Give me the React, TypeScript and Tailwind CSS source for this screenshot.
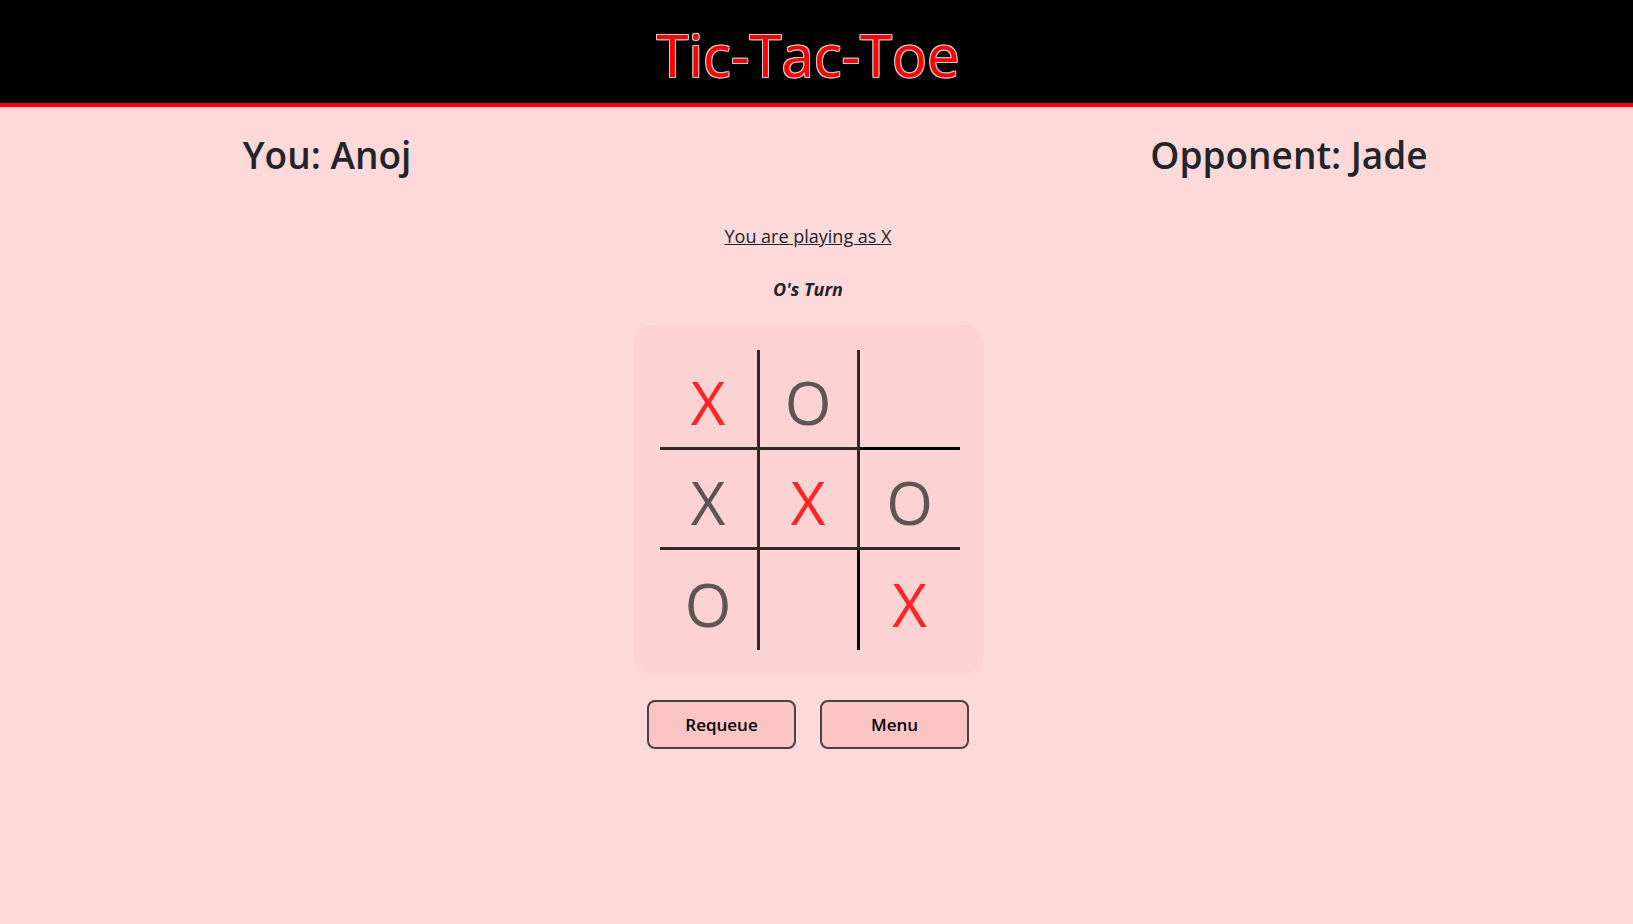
import React from 'react';

type Mark = 'X' | 'O' | '';

const board: { mark: Mark; mine: boolean }[] = [
    { mark: 'X', mine: true }, { mark: 'O', mine: false }, { mark: '', mine: false },
    { mark: 'X', mine: false }, { mark: 'X', mine: true }, { mark: 'O', mine: false },
    { mark: 'O', mine: false }, { mark: '', mine: false }, { mark: 'X', mine: true },
];

function Cell({ index, mark, mine }: { index: number; mark: Mark; mine: boolean }) {
    const col = index % 3;
    const row = Math.floor(index / 3);
    const lineColor = mark === '' ? 'border-black' : 'border-[#302828]';

    return (
        <div
            className={[
                'w-[100px] h-[100px] flex items-center justify-center box-border',
                lineColor,
                col < 2 ? 'border-r-[3px]' : '',
                row < 2 ? 'border-b-[3px]' : '',
            ].join(' ')}
        >
            <span
                className={`text-[60px] leading-none pt-[8px] ${mine ? 'text-[#ff2424]' : 'text-[#5f5555]'}`}
            >
                {mark}
            </span>
        </div>
    );
}

export default function App() {
    return (
        <div className="min-h-[924px] bg-[#fdd9d9] font-['Open_Sans',sans-serif] text-[#212529]">
            <header className="h-[107px] bg-black border-b-4 border-[#ff0000] flex items-center justify-center pr-[17px]">
                <h1 className="text-[58px] text-[#ff0000] leading-none mt-[6px] [text-shadow:1px_1px_0_#cfcfcf,-1px_-1px_0_#cfcfcf,1px_-1px_0_#cfcfcf,-1px_1px_0_#cfcfcf]">
                    Tic-Tac-Toe
                </h1>
            </header>

            <div className="w-[1616px]">
                <div className="flex justify-between pt-[24px]">
                    <h2 className="w-[654px] text-center text-[37px] font-semibold leading-[48px]">You: Anoj</h2>
                    <h2 className="w-[654px] text-center text-[37px] font-semibold leading-[48px]">Opponent: Jade</h2>
                </div>

                <div className="flex flex-col items-center">
                    <p className="mt-[43px] text-[18px] underline leading-[28px]">You are playing as X</p>
                    <p className="mt-[25px] text-[18px] font-bold italic leading-[28px]">O's Turn</p>

                    <div className="mt-[22px] w-[351px] h-[349px] rounded-[20px] bg-[#fcd2d2] flex items-center justify-center pl-[3px]">
                        <div className="grid grid-cols-3">
                            {board.map((c, i) => (
                                <Cell key={i} index={i} mark={c.mark} mine={c.mine} />
                            ))}
                        </div>
                    </div>

                    <div className="mt-[26px] flex gap-[24px]">
                        <button className="w-[149px] h-[49px] rounded-[8px] border-2 border-[#444] bg-[#fdc4c4] text-[17px] font-semibold text-black">
                            Requeue
                        </button>
                        <button className="w-[149px] h-[49px] rounded-[8px] border-2 border-[#444] bg-[#fdc4c4] text-[17px] font-semibold text-black">
                            Menu
                        </button>
                    </div>
                </div>
            </div>
        </div>
    );
}
